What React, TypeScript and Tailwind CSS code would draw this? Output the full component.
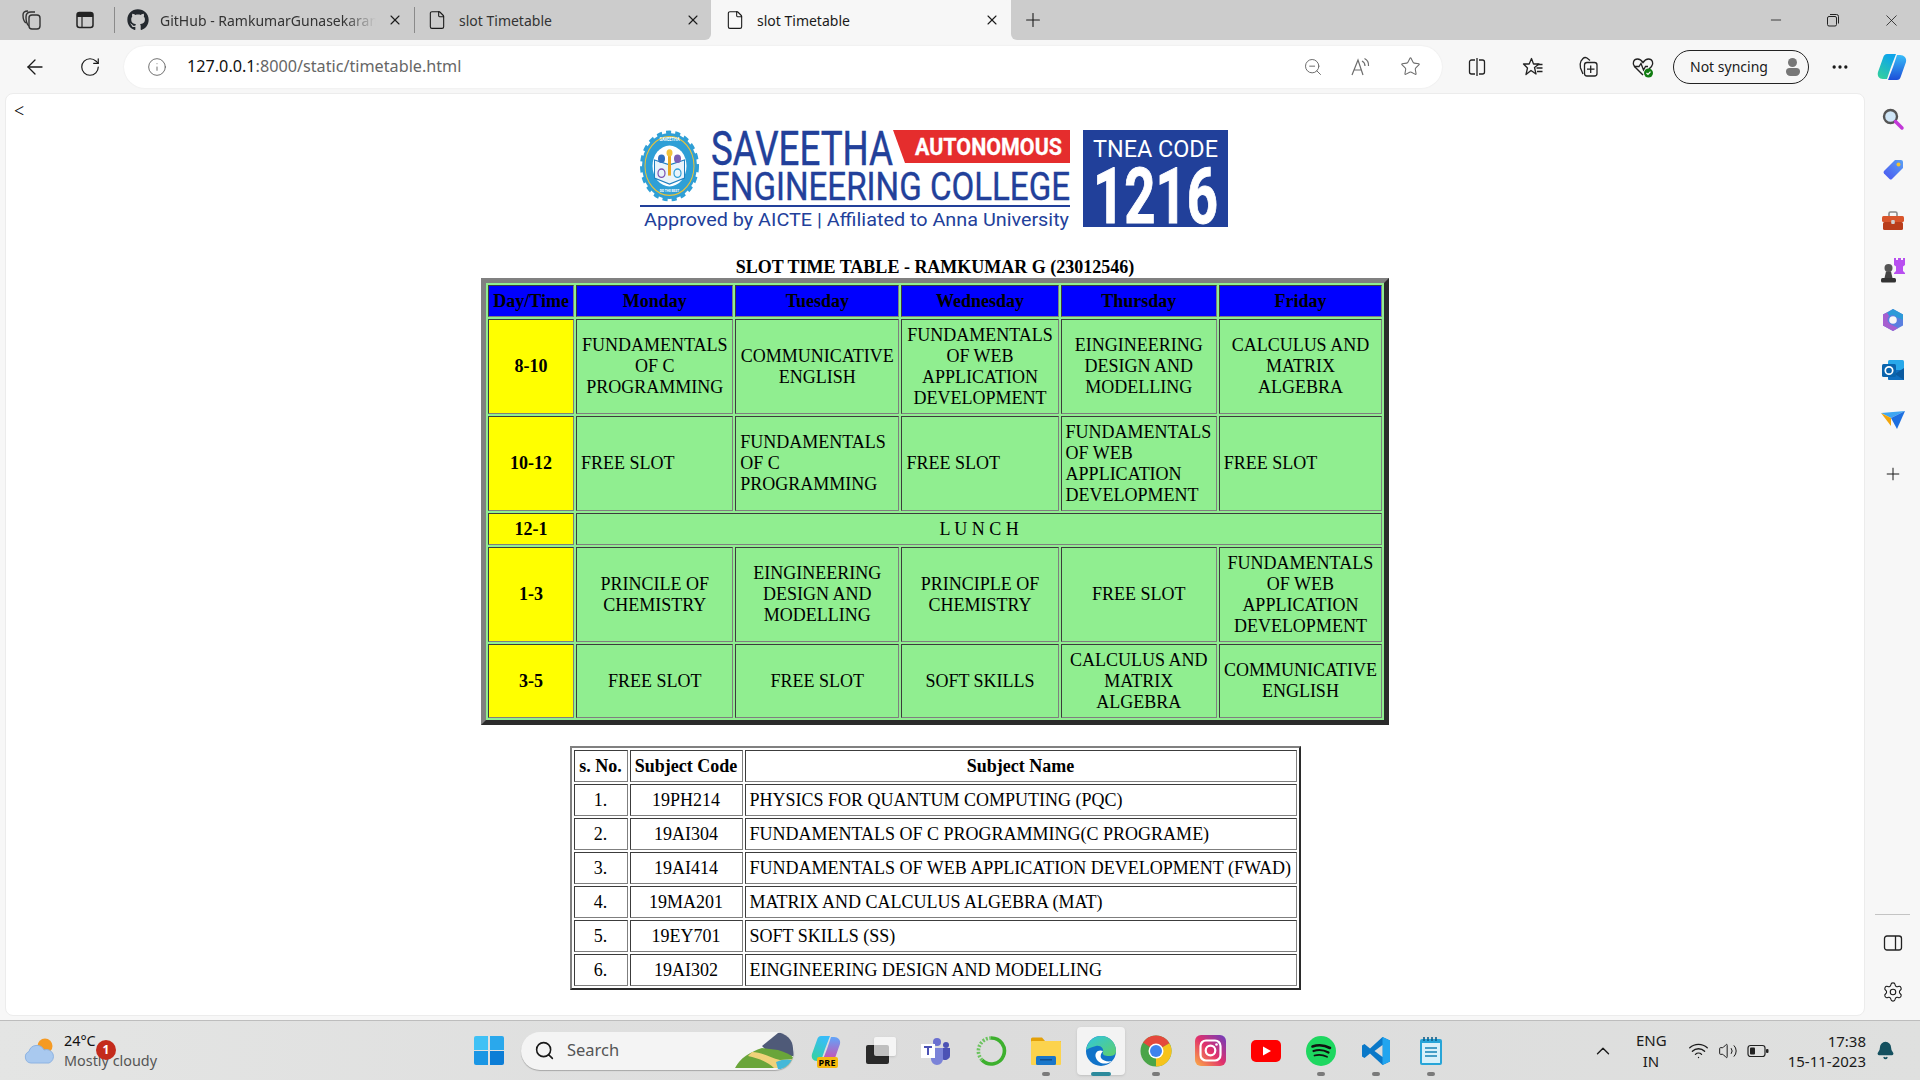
import {
  ArrowLeft,
  Bell,
  ChevronUp,
  Ellipsis,
  File,
  Info,
  Minus,
  Plus,
  RotateCw,
  Search,
  Settings,
  Star,
  Volume2,
  Wifi,
  X,
  ZoomOut,
} from "lucide-react";
import { FaGithub } from "react-icons/fa";

type Cell = { text: string; left?: boolean };

const days = ["Monday", "Tuesday", "Wednesday", "Thursday", "Friday"];

const FWAD = "FUNDAMENTALS OF WEB APPLICATION DEVELOPMENT";
const FC = "FUNDAMENTALS OF C PROGRAMMING";
const EDM = "EINGINEERING DESIGN AND MODELLING";
const CMA = "CALCULUS AND MATRIX ALGEBRA";
const CE = "COMMUNICATIVE ENGLISH";

const slots: { time: string; height: string; cells: Cell[] }[] = [
  {
    time: "8-10",
    height: "h-[95px]",
    cells: [{ text: FC }, { text: CE }, { text: FWAD }, { text: EDM }, { text: CMA }],
  },
  {
    time: "10-12",
    height: "h-[95px]",
    cells: [
      { text: "FREE SLOT", left: true },
      { text: FC, left: true },
      { text: "FREE SLOT", left: true },
      { text: FWAD, left: true },
      { text: "FREE SLOT", left: true },
    ],
  },
];

const afternoon: { time: string; height: string; cells: Cell[] }[] = [
  {
    time: "1-3",
    height: "h-[95px]",
    cells: [
      { text: "PRINCILE OF CHEMISTRY" },
      { text: EDM },
      { text: "PRINCIPLE OF CHEMISTRY" },
      { text: "FREE SLOT" },
      { text: FWAD },
    ],
  },
  {
    time: "3-5",
    height: "h-[74px]",
    cells: [
      { text: "FREE SLOT" },
      { text: "FREE SLOT" },
      { text: "SOFT SKILLS" },
      { text: CMA },
      { text: CE },
    ],
  },
];

const subjects = [
  ["1.", "19PH214", "PHYSICS FOR QUANTUM COMPUTING (PQC)"],
  ["2.", "19AI304", "FUNDAMENTALS OF C PROGRAMMING(C PROGRAME)"],
  ["3.", "19AI414", "FUNDAMENTALS OF WEB APPLICATION DEVELOPMENT (FWAD)"],
  ["4.", "19MA201", "MATRIX AND CALCULUS ALGEBRA (MAT)"],
  ["5.", "19EY701", "SOFT SKILLS (SS)"],
  ["6.", "19AI302", "EINGINEERING DESIGN AND MODELLING"],
];

const cellBorder = "border border-t-[#3c3c3c] border-l-[#3c3c3c] border-r-[#7f7f7f] border-b-[#7f7f7f]";

function SlotRow({ time, height, cells }: { time: string; height: string; cells: Cell[] }) {
  return (
    <tr className={height}>
      <td className={`${cellBorder} bg-[#ffff00] text-center font-bold`}>{time}</td>
      {cells.map((c, i) => (
        <td key={i} className={`${cellBorder} px-[4px] py-0 ${c.left ? "text-left" : "text-center"}`}>
          {c.text}
        </td>
      ))}
    </tr>
  );
}

function Logo() {
  const navy = "#22409a";
  return (
    <svg width="590" height="100" viewBox="0 0 590 100" className="block">
      <g transform="translate(29.5 36) scale(1 1.2)">
        <circle r="27.5" fill="#2f9fd6" stroke="#2f9fd6" strokeWidth="4" strokeDasharray="5 4" />
        <circle r="24.5" fill="#2f9fd6" stroke="#e8c33a" strokeWidth="1" />
        <circle r="17" fill="#fff" />
        <path d="M-15 -5 L0 -1 L15 -5 L15 10 L0 15 L-15 10 Z" fill="#e9f4fb" stroke="#1e7fc0" strokeWidth="1" />
        <circle cx="-8" cy="-6" r="3.5" fill="#2f6fc0" />
        <circle cx="8" cy="-6" r="3.5" fill="#7a5fb5" />
        <rect x="-1.5" y="-9" width="3" height="17" fill="#e9a820" />
        <circle cy="-11" r="3" fill="#f3c33a" />
        <circle cx="-8" cy="6" r="3.5" fill="none" stroke="#7a4fb0" strokeWidth="1.2" />
        <circle cx="8" cy="6" r="3.5" fill="none" stroke="#2f9fd6" strokeWidth="1.2" />
        <text y="-20.5" textAnchor="middle" fontFamily="Roboto, sans-serif" fontWeight="700" fontSize="4" fill="#fff">
          SAVEETHA
        </text>
        <text y="21.5" textAnchor="middle" fontFamily="Roboto, sans-serif" fontWeight="700" fontSize="3.2" fill="#fff">
          DO THE BEST
        </text>
      </g>
      <text x="71" y="35" fontFamily="Roboto, sans-serif" fontSize="49" fill={navy} stroke={navy} strokeWidth="0.5" textLength="182" lengthAdjust="spacingAndGlyphs">
        SAVEETHA
      </text>
      <polygon points="253,0 430,0 430,33 265,33" fill="#e52d2d" />
      <text x="275" y="25" fontFamily="Roboto, sans-serif" fontWeight="700" fontSize="24" fill="#fff" stroke="#fff" strokeWidth="0.3" textLength="147" lengthAdjust="spacingAndGlyphs">
        AUTONOMOUS
      </text>
      <text x="71" y="70" fontFamily="Roboto, sans-serif" fontSize="39" fill={navy} stroke={navy} strokeWidth="0.4" textLength="359" lengthAdjust="spacingAndGlyphs">
        ENGINEERING COLLEGE
      </text>
      <rect x="0" y="75" width="430" height="2" fill={navy} />
      <text x="4" y="96" fontFamily="Roboto, sans-serif" fontSize="19" fill={navy} textLength="425" lengthAdjust="spacingAndGlyphs">
        Approved by AICTE | Affiliated to Anna University
      </text>
      <rect x="443" y="0" width="145" height="97" fill="#21409a" />
      <text x="453" y="27" fontFamily="Roboto, sans-serif" fontSize="24" fill="#fff" textLength="125" lengthAdjust="spacingAndGlyphs">
        TNEA CODE
      </text>
      <text x="453" y="93" fontFamily="Roboto, sans-serif" fontWeight="700" fontSize="78" fill="#fff" stroke="#fff" strokeWidth="1" textLength="125" lengthAdjust="spacingAndGlyphs">
        1216
      </text>
    </svg>
  );
}

function WorkspaceIcon() {
  return (
    <svg width="22" height="22" viewBox="0 0 22 22" fill="none" stroke="#333" strokeWidth="1.4">
      <rect x="8" y="6" width="11" height="14" rx="3" />
      <path d="M8 17 C5 15 5 11 5 8 C5 5 7 3 10 3 L14 3" />
      <path d="M5 14 C2 12 2 9 2 6 C2 3 4 2 7 2" />
    </svg>
  );
}

function TabsIcon() {
  return (
    <svg width="20" height="20" viewBox="0 0 20 20" fill="none">
      <rect x="2" y="2.5" width="16" height="15" rx="2.5" stroke="#222" strokeWidth="1.5" />
      <path d="M2 5 a2.5 2.5 0 0 1 2.5 -2.5 h11 a2.5 2.5 0 0 1 2.5 2.5 v2 h-16 z" fill="#222" />
      <path d="M7 7 v10" stroke="#222" strokeWidth="1.2" />
    </svg>
  );
}

function RestoreIcon() {
  return (
    <svg width="14" height="14" viewBox="0 0 14 14" fill="none" stroke="#222" strokeWidth="1">
      <rect x="1.5" y="3.5" width="9" height="9.5" rx="1.5" />
      <path d="M4 1.5 h6.5 a2 2 0 0 1 2 2 v7" />
    </svg>
  );
}

function ReadAloudIcon() {
  return (
    <svg width="22" height="22" viewBox="0 0 22 22" fill="none" stroke="#6d6d6d" strokeWidth="1.2">
      <path d="M2 19 L8 4 L13 19 M4 14 H11.5" />
      <path d="M12 5 C14 6 15 8 15 10 M14.5 2.5 C17.5 4 18.8 7 18.5 10" />
    </svg>
  );
}

function SplitIcon() {
  return (
    <svg width="20" height="20" viewBox="0 0 20 20" fill="none" stroke="#222" strokeWidth="1.3">
      <path d="M8 3 H4.5 A2 2 0 0 0 2.5 5 V15 A2 2 0 0 0 4.5 17 H8 M12 3 H15.5 A2 2 0 0 1 17.5 5 V15 A2 2 0 0 1 15.5 17 H12" />
      <path d="M10 1 V19" />
    </svg>
  );
}

function FavoritesIcon() {
  return (
    <svg width="22" height="22" viewBox="0 0 22 22" fill="none" stroke="#222" strokeWidth="1.3" strokeLinejoin="round">
      <path d="M9.5 2.5 L11.5 8 H17 L12.5 11.5 L14 18 L9 14.5 L4 18.5 L5.5 12 L1.5 8 H7.2 Z" />
      <path d="M15 8.5 H20.5 M14.5 12 H20.5 M15 15.5 H20.5" />
    </svg>
  );
}

function CollectionsIcon() {
  return (
    <svg width="22" height="22" viewBox="0 0 22 22" fill="none" stroke="#222" strokeWidth="1.3">
      <path d="M6 18 L3.5 12 C3 10 3 7 4 5 L6 2.5 C7 1.5 9 1.5 10 2 L13 4.5" />
      <rect x="7.5" y="6.5" width="12.5" height="13.5" rx="2.5" />
      <path d="M13.7 9.5 V17 M10 13.2 H17.5" />
    </svg>
  );
}

function HealthIcon() {
  return (
    <svg width="24" height="24" viewBox="0 0 24 24" fill="none">
      <path
        d="M12 20 L3.5 11.5 C1 8.5 2.5 4 6.5 4 C9 4 11 6 12 7.5 C13 6 15 4 17.5 4 C21.5 4 23 8.5 20.5 11.5 L18 14"
        stroke="#222"
        strokeWidth="1.4"
      />
      <path d="M3 11.5 H8 L10 8.5 L12.5 15 L14.5 11.5 H17" stroke="#222" strokeWidth="1.3" />
      <circle cx="17.5" cy="18" r="4.5" fill="#107c10" />
      <path d="M15.5 18 L17 19.5 L19.5 16.7" stroke="#fff" strokeWidth="1.2" />
    </svg>
  );
}

function CopilotIcon({ id, colors }: { id: string; colors: string[] }) {
  return (
    <svg width="30" height="30" viewBox="0 0 30 30">
      <defs>
        <linearGradient id={`${id}-a`} x1="0.5" y1="0" x2="0" y2="1">
          <stop offset="0" stopColor={colors[0]} />
          <stop offset="1" stopColor={colors[1]} />
        </linearGradient>
        <linearGradient id={`${id}-b`} x1="0.5" y1="0" x2="0.5" y2="1">
          <stop offset="0" stopColor={colors[2]} />
          <stop offset="1" stopColor={colors[3]} />
        </linearGradient>
      </defs>
      <path d="M10 2 H19 L14 15 L10 27 H6 C2 27 0 24 1 20 L6 6 C7 3 8 2 10 2 Z" fill={`url(#${id}-a)`} />
      <path d="M20 28 H11 L16 15 L20 3 H23 C27 3 30 6 29 10 L24 24 C23 27 22 28 20 28 Z" fill={`url(#${id}-b)`} />
    </svg>
  );
}

function SideSearchIcon() {
  return (
    <svg width="24" height="24" viewBox="0 0 24 24" fill="none">
      <circle cx="9.5" cy="9.5" r="6.5" fill="#cfe6f7" stroke="#555" strokeWidth="2.4" />
      <path d="M14.5 14.5 L21 21" stroke="#c238d8" strokeWidth="3.5" strokeLinecap="round" />
    </svg>
  );
}

function TagIcon() {
  return (
    <svg width="24" height="24" viewBox="0 0 24 24">
      <defs>
        <linearGradient id="tag-g" x1="0" y1="1" x2="1" y2="0">
          <stop offset="0" stopColor="#4a55f0" />
          <stop offset="1" stopColor="#5aa0f5" />
        </linearGradient>
      </defs>
      <path d="M14 2 H20 A2 2 0 0 1 22 4 V10 L11 21 A2 2 0 0 1 8.5 21 L3 15.5 A2 2 0 0 1 3 13 Z" fill="url(#tag-g)" />
      <circle cx="17.5" cy="6.5" r="2" fill="#f2c230" />
    </svg>
  );
}

function ToolboxIcon() {
  return (
    <svg width="24" height="24" viewBox="0 0 24 24">
      <path d="M8 7 V4.5 A1.5 1.5 0 0 1 9.5 3 H14.5 A1.5 1.5 0 0 1 16 4.5 V7" fill="none" stroke="#888" strokeWidth="1.6" />
      <rect x="1" y="7" width="22" height="6" rx="1.5" fill="#d9552b" />
      <rect x="2" y="13" width="20" height="8" rx="1.5" fill="#b93d1b" />
      <rect x="10.2" y="11" width="3.6" height="4" rx="1" fill="#cfcfcf" />
    </svg>
  );
}

function ChessIcon() {
  return (
    <svg width="24" height="26" viewBox="0 0 24 26">
      <path d="M13 1 H15 V3 H17 V1 H20 V3 H22 V1 H24 V8 L22 9.5 V14 L24 16 V17 H13 V16 L15 14 V9.5 L13 8 Z" fill="#b84ff0" />
      <circle cx="7.5" cy="11" r="4" fill="#555" />
      <path d="M5 14.5 H10 L11.5 21 H3.5 Z" fill="#444" />
      <rect x="0" y="21" width="15" height="4.5" rx="1.5" fill="#333" />
    </svg>
  );
}

function M365Icon() {
  return (
    <svg width="24" height="24" viewBox="0 0 24 24">
      <path d="M12 1 L22 6.5 V17.5 L12 23 L2 17.5 V6.5 Z" fill="#5a7fe0" />
      <path d="M12 1 L22 6.5 L22 12 L15 9 A4 4 0 0 0 9 8 L6 5 Z" fill="#2d9ad8" />
      <path d="M2 6.5 V17.5 L12 23 L17 20 L9 16 A5 5 0 0 1 8 8 L6 4.5 Z" fill="#a65fd0" />
      <circle cx="12" cy="12" r="3.8" fill="#f7f7f7" />
    </svg>
  );
}

function OutlookIcon() {
  return (
    <svg width="24" height="24" viewBox="0 0 24 24">
      <rect x="7" y="2" width="16" height="20" rx="1.5" fill="#28a8ea" />
      <path d="M7 12 L23 12 V22 H8.5 A1.5 1.5 0 0 1 7 20.5 Z" fill="#0f6fc0" />
      <path d="M23 10 L14 16 L23 22 Z" fill="#0a5aa0" />
      <rect x="1" y="6" width="14" height="13" rx="1.5" fill="#0a64ad" />
      <circle cx="8" cy="12.5" r="3.7" fill="none" stroke="#fff" strokeWidth="1.7" />
    </svg>
  );
}

function SendIcon() {
  return (
    <svg width="24" height="20" viewBox="0 0 24 20">
      <path d="M0 3 L24 1 L10 8 Z" fill="#3ea6f2" />
      <path d="M0 3 L10 8 L10 16 Z" fill="#f2a60c" />
      <path d="M24 1 L10 8 L16 19 Z" fill="#1d6fe0" />
    </svg>
  );
}

function PanelIcon() {
  return (
    <svg width="20" height="18" viewBox="0 0 20 18" fill="none" stroke="#222" strokeWidth="1.3">
      <rect x="1.5" y="2" width="17" height="14" rx="2.5" />
      <path d="M12.5 2 V16" />
    </svg>
  );
}

function WeatherIcon() {
  return (
    <svg width="32" height="26" viewBox="0 0 32 26">
      <circle cx="21" cy="8" r="7.5" fill="#f59a23" />
      <path d="M7 25 A6 6 0 0 1 5 13.5 A8 8 0 0 1 20 12 A6.5 6.5 0 0 1 25 25 Z" fill="#a9c9ef" stroke="#8db3e2" strokeWidth="1" />
    </svg>
  );
}

function WindowsIcon() {
  return (
    <div className="grid h-[29px] w-[30px] grid-cols-2 gap-[1.5px]">
      <div className="rounded-tl-[2px] bg-[#3fc1f5]" />
      <div className="rounded-tr-[2px] bg-[#2aa8ec]" />
      <div className="rounded-bl-[2px] bg-[#1a96e4]" />
      <div className="rounded-br-[2px] bg-[#0c7dd6]" />
    </div>
  );
}

function SearchScene() {
  return (
    <svg width="62" height="38" viewBox="0 0 62 38">
      <path d="M30 14 L46 1 C52 0 58 2 60 8 L62 24 L40 24 Z" fill="#4f5a78" />
      <path d="M3 36 C8 26 18 20 30 16 L46 18 C52 20 58 22 62 26 L60 36 Z" fill="#6aa53a" />
      <path d="M20 20 C30 20 38 26 48 28 L60 27 L58 36 L42 36 C36 30 26 26 16 24 Z" fill="#f0d27a" />
      <path d="M44 30 C50 27 56 27 61 28 L59 37 L46 37 Z" fill="#45b8d8" />
    </svg>
  );
}

function StoreSquareIcon() {
  return (
    <div className="relative h-[27px] w-[30px]">
      <div className="absolute bottom-0 left-0 h-[19px] w-[23px] rounded-[2px] bg-[#2a2a2a]" />
      <div className="absolute right-0 top-0 h-[19px] w-[22px] rounded-[2px] bg-white/70 shadow-sm" />
    </div>
  );
}

function PreCopilot() {
  return (
    <div className="relative h-[34px] w-[30px]">
      <CopilotIcon id="cop-pre" colors={["#38bdf8", "#34d399", "#60a5fa", "#d946a8"]} />
      <span className="absolute bottom-0 left-[6px] rounded-[2px] bg-[#f5b90f] px-[2px] text-[9px] font-bold leading-[11px] tracking-wide text-black">
        PRE
      </span>
    </div>
  );
}

function TeamsIcon() {
  return (
    <svg width="30" height="28" viewBox="0 0 30 28">
      <circle cx="16" cy="5" r="4" fill="#6a6fd0" />
      <circle cx="25" cy="8" r="3" fill="#4c52b5" />
      <path d="M20 11 H29 V19 A5 5 0 0 1 21 22 Z" fill="#4c52b5" />
      <path d="M9 11 H22 V22 A6 6 0 0 1 10 22 Z" fill="#7b83d8" />
      <rect x="0" y="7" width="14" height="14" fill="#fff" />
      <path d="M3 10 H11 M7 10 V18" stroke="#4c52b5" strokeWidth="2" />
    </svg>
  );
}

function RingIcon() {
  return (
    <svg width="32" height="32" viewBox="0 0 32 32" fill="none">
      <path d="M16 3 A13 13 0 1 1 7 25" stroke="#3db02e" strokeWidth="3.6" />
      <path d="M7 25 A13 13 0 0 1 16 3" stroke="#6cc35f" strokeWidth="3.6" strokeDasharray="2 1.5" />
    </svg>
  );
}

function FolderIcon() {
  return (
    <svg width="30" height="30" viewBox="0 0 30 30">
      <path d="M0 3 A1.5 1.5 0 0 1 1.5 1.5 H11 L14 5 H30 V10 H0 Z" fill="#e3a008" />
      <rect x="0" y="5" width="30" height="24" rx="1" fill="#fcd34d" />
      <rect x="5" y="20" width="20" height="9" rx="1.5" fill="#1976c9" />
      <rect x="9" y="23" width="12" height="1.5" fill="#0f4f8f" />
    </svg>
  );
}

function EdgeIcon() {
  return (
    <svg width="32" height="32" viewBox="0 0 32 32">
      <defs>
        <linearGradient id="edge-g" x1="0" y1="0" x2="1" y2="1">
          <stop offset="0" stopColor="#2fc5e0" />
          <stop offset="1" stopColor="#5fd06a" />
        </linearGradient>
      </defs>
      <circle cx="16" cy="16" r="15" fill="#1173c9" />
      <path d="M1 15 C3 5 10 1 16 1 C25 1 31 8 31 16 C31 20 28 21 24 21 C20 21 17 20 18 17 C19 14 16 10 11 11 C6 12 3 14 1 15 Z" fill="url(#edge-g)" />
      <path d="M18 16 C13 14 9 18 11 23 C13 28 20 31 27 26 C23 27 18 26 16 23 C15 21 16 18 18 16 Z" fill="#fff" />
    </svg>
  );
}

function ChromeIcon() {
  return (
    <svg width="32" height="32" viewBox="0 0 32 32">
      <circle cx="16" cy="16" r="15.5" fill="#4aa548" />
      <path d="M16 .5 A15.5 15.5 0 0 1 29.4 8.2 L16 16 L3 7.5 A15.5 15.5 0 0 1 16 .5 Z" fill="#e5483c" />
      <path d="M29.4 8.2 A15.5 15.5 0 0 1 16 31.5 L16 16 Z" fill="#f6c31c" />
      <circle cx="16" cy="16" r="7.5" fill="#fff" />
      <circle cx="16" cy="16" r="6" fill="#3f83ee" />
    </svg>
  );
}

function InstagramIcon() {
  return (
    <svg width="31" height="31" viewBox="0 0 31 31">
      <defs>
        <linearGradient id="ig-g" x1="0" y1="1" x2="1" y2="0">
          <stop offset="0" stopColor="#fcb045" />
          <stop offset="0.5" stopColor="#e1306c" />
          <stop offset="1" stopColor="#6a3fc0" />
        </linearGradient>
      </defs>
      <rect width="31" height="31" rx="6" fill="url(#ig-g)" />
      <rect x="5.5" y="5.5" width="20" height="20" rx="5.5" fill="none" stroke="#fff" strokeWidth="2.2" />
      <circle cx="15.5" cy="15.5" r="4.8" fill="none" stroke="#fff" strokeWidth="2.2" />
      <circle cx="21.5" cy="9.5" r="1.3" fill="#fff" />
    </svg>
  );
}

function YoutubeIcon() {
  return (
    <svg width="30" height="22" viewBox="0 0 30 22">
      <rect width="30" height="22" rx="5" fill="#ff0000" />
      <path d="M12 6.5 L20 11 L12 15.5 Z" fill="#fff" />
    </svg>
  );
}

function SpotifyIcon() {
  return (
    <svg width="30" height="30" viewBox="0 0 30 30" fill="none">
      <circle cx="15" cy="15" r="15" fill="#1ed760" />
      <path d="M6.5 10.5 C12 8.5 18.5 9 24 12" stroke="#111" strokeWidth="2.6" strokeLinecap="round" />
      <path d="M7.5 15 C12 13.5 18 14 22.5 16.5" stroke="#111" strokeWidth="2.2" strokeLinecap="round" />
      <path d="M8.5 19.5 C12.5 18.3 17 18.7 21 20.8" stroke="#111" strokeWidth="1.8" strokeLinecap="round" />
    </svg>
  );
}

function VsCodeIcon() {
  return (
    <svg width="30" height="30" viewBox="0 0 30 30">
      <path d="M21.5 1 L29 4.5 V25.5 L21.5 29 L9 17.5 L3.5 22 L1 20.5 V9.5 L3.5 8 L9 12.5 Z" fill="#0a78c8" />
      <path d="M21.5 1 L29 4.5 V25.5 L21.5 29 Z" fill="#22a5ef" />
      <path d="M21.5 9 V21 L13.5 15 Z" fill="#dcdcdc" />
    </svg>
  );
}

function NotepadIcon() {
  return (
    <svg width="24" height="30" viewBox="0 0 24 30">
      <rect x="1" y="3" width="22" height="26" rx="2" fill="#27a5d8" />
      <rect x="3" y="7" width="18" height="20" fill="#d8f1fa" />
      <path d="M6 12 H18 M6 16 H18 M6 20 H18" stroke="#1582b5" strokeWidth="1.5" />
      <path d="M5 1 V5 M9 1 V5 M13 1 V5 M17 1 V5" stroke="#0f5f8c" strokeWidth="1.6" />
    </svg>
  );
}

function BatteryIcon() {
  return (
    <svg width="22" height="16" viewBox="0 0 22 16" fill="none">
      <rect x="1" y="2.5" width="17" height="11" rx="2.5" stroke="#222" strokeWidth="1.2" />
      <rect x="3" y="4.5" width="5" height="7" rx="1" fill="#222" />
      <rect x="19" y="6" width="2.5" height="4" rx="1" fill="#222" />
    </svg>
  );
}

// one taskbar slot, 55px pitch, with the running dot under it
function Slot({ children, dot, active }: { children: React.ReactNode; dot?: boolean; active?: boolean }) {
  return (
    <div className="relative flex h-[48px] w-[55px] items-center justify-center">
      {active && <div className="absolute inset-x-[3.5px] inset-y-0 rounded-[4px] bg-[#f3f3f3] shadow-sm" />}
      <div className="relative">{children}</div>
      {dot && <div className="absolute bottom-[-1px] h-[4px] w-[8px] rounded-full bg-[#7a7a7a]" />}
      {active && <div className="absolute bottom-[-1px] h-[4px] w-[20px] rounded-full bg-[#2c8a9c]" />}
    </div>
  );
}

function SideIcon({ children, className }: { children: React.ReactNode; className: string }) {
  return <div className={`flex items-center justify-center ${className}`}>{children}</div>;
}

export default function App() {
  return (
    <div className="flex h-[1080px] w-[1920px] flex-col overflow-hidden font-['Noto_Sans',sans-serif] text-[#1a1a1a]">
      {/* tab strip */}
      <div className="flex h-[40px] bg-[#f7f7f7] text-[14px]">
        <div className="flex w-[711px] items-center rounded-br-[6px] bg-[#cccccc]">
          <div className="flex w-[64px] justify-center"><WorkspaceIcon /></div>
          <div className="flex w-[42px] justify-center"><TabsIcon /></div>
          <div className="ml-[8px] h-[26px] w-px bg-[#8a8a8a]" />
          <div className="ml-[12px] flex w-[22px] justify-center"><FaGithub size={22} color="#24292f" /></div>
          <span className="ml-[11px] w-[216px] overflow-hidden whitespace-nowrap text-[#333] [mask-image:linear-gradient(to_right,black_85%,transparent)]">
            GitHub - RamkumarGunasekaran
          </span>
          <div className="ml-[10px] flex w-[18px] justify-center"><X size={16} strokeWidth={1.6} /></div>
          <div className="ml-[10px] h-[26px] w-px bg-[#8a8a8a]" />
          <div className="ml-[12px] flex w-[20px] justify-center"><File size={20} strokeWidth={1.3} /></div>
          <span className="ml-[12px] w-[226px] whitespace-nowrap text-[#333]">slot Timetable</span>
          <X size={16} strokeWidth={1.6} />
        </div>
        <div className="flex w-[300px] items-center rounded-t-[8px] bg-[#f7f7f7]">
          <div className="ml-[14px] flex w-[20px] justify-center"><File size={20} strokeWidth={1.3} /></div>
          <span className="ml-[12px] w-[227px] whitespace-nowrap">slot Timetable</span>
          <X size={16} strokeWidth={1.6} />
        </div>
        <div className="flex flex-1 items-center rounded-bl-[6px] bg-[#cccccc]">
          <Plus size={22} strokeWidth={1.2} className="ml-[11px]" />
          <div className="flex-1" />
          <Minus size={16} strokeWidth={1.2} className="mr-[42px]" />
          <div className="mr-[42px]"><RestoreIcon /></div>
          <X size={19} strokeWidth={1} className="mr-[19px]" />
        </div>
      </div>

      {/* toolbar */}
      <div className="flex h-[53px] items-center bg-[#f7f7f7]">
        <div className="flex w-[70px] justify-center"><ArrowLeft size={24} strokeWidth={1.3} /></div>
        <div className="flex w-[40px] justify-center"><RotateCw size={22} strokeWidth={1.3} /></div>
        <div className="ml-[14px] flex h-[42px] w-[1318px] items-center rounded-full bg-white shadow-[0_0_2px_rgba(0,0,0,0.08)]">
          <div className="ml-[23px] flex w-[20px] justify-center"><Info size={20} strokeWidth={1} color="#555" /></div>
          <span className="ml-[20px] whitespace-nowrap text-[16.2px] text-[#666]">
            <span className="text-[#111]">127.0.0.1</span>:8000/static/timetable.html
          </span>
          <div className="flex-1" />
          <ZoomOut size={20} strokeWidth={1.2} color="#6d6d6d" className="mr-[27px]" />
          <div className="mr-[28px]"><ReadAloudIcon /></div>
          <Star size={21} strokeWidth={1.2} color="#6d6d6d" className="mr-[21px]" />
        </div>
        <div className="ml-[25px] flex w-[20px] justify-center"><SplitIcon /></div>
        <div className="ml-[35px] flex w-[22px] justify-center"><FavoritesIcon /></div>
        <div className="ml-[33px] flex w-[22px] justify-center"><CollectionsIcon /></div>
        <div className="ml-[32px] flex w-[24px] justify-center"><HealthIcon /></div>
        <div className="ml-[18px] flex h-[34px] w-[136px] items-center rounded-full border border-[#222] pl-[16px] text-[14px]">
          <span className="whitespace-nowrap">Not syncing</span>
          <div className="ml-[11px] flex h-[28px] w-[28px] flex-col items-center justify-center rounded-full bg-[#f7f7f7]">
            <div className="h-[9px] w-[9px] rounded-full bg-[#777]" />
            <div className="mt-px h-[8px] w-[14px] rounded-t-[4px] rounded-b-[5px] bg-[#777]" />
          </div>
        </div>
        <div className="ml-[21px] flex w-[20px] justify-center"><Ellipsis size={20} strokeWidth={2} /></div>
        <div className="ml-[27px] flex w-[30px] justify-center">
          <CopilotIcon id="cop-main" colors={["#0ea5e9", "#34d399", "#38bdf8", "#1d4ed8"]} />
        </div>
      </div>

      {/* page + edge sidebar */}
      <div className="flex h-[927px] bg-[#f7f7f7] pb-[4px] pl-[5px]">
        <main className="flex w-[1860px] flex-col items-center rounded-[8px] border border-[#ececec] bg-white font-['Liberation_Serif',serif] text-[18px] leading-[21px] text-black">
          <div className="mt-[7px] self-start pl-[8px]">&lt;</div>
          <div className="mt-[8px]"><Logo /></div>
          <h1 className="mt-[27px] h-[21px] font-bold">SLOT TIME TABLE - RAMKUMAR G (23012546)</h1>
          <table className="w-[908px] table-fixed border-separate border-spacing-[2px] border-[5.5px] border-t-[#808080] border-l-[#808080] border-r-[#2b2b2b] border-b-[#2b2b2b] bg-[#90ee90]">
            <colgroup>
              <col className="w-[86px]" />
              <col className="w-[157px]" />
              <col className="w-[164px]" />
              <col className="w-[157px]" />
              <col className="w-[156px]" />
              <col className="w-[163px]" />
            </colgroup>
            <thead>
              <tr className="h-[32px] bg-[#0000ff] font-bold">
                <th className={cellBorder}>Day/Time</th>
                {days.map((d) => (
                  <th key={d} className={cellBorder}>{d}</th>
                ))}
              </tr>
            </thead>
            <tbody>
              {slots.map((s) => (
                <SlotRow key={s.time} {...s} />
              ))}
              <tr className="h-[32px]">
                <td className={`${cellBorder} bg-[#ffff00] text-center font-bold`}>12-1</td>
                <td colSpan={5} className={`${cellBorder} text-center`}>L U N C H</td>
              </tr>
              {afternoon.map((s) => (
                <SlotRow key={s.time} {...s} />
              ))}
            </tbody>
          </table>
          <table className="mt-[21px] w-[731px] table-fixed border-separate border-spacing-[2px] border-2 border-t-[#808080] border-l-[#808080] border-r-[#2b2b2b] border-b-[#2b2b2b]">
            <colgroup>
              <col className="w-[54px]" />
              <col className="w-[113px]" />
              <col className="w-[552px]" />
            </colgroup>
            <thead>
              <tr className="h-[32px]">
                <th className={cellBorder}>s. No.</th>
                <th className={`${cellBorder} whitespace-nowrap`}>Subject Code</th>
                <th className={cellBorder}>Subject Name</th>
              </tr>
            </thead>
            <tbody>
              {subjects.map(([no, code, name]) => (
                <tr key={no} className="h-[32px]">
                  <td className={`${cellBorder} text-center`}>{no}</td>
                  <td className={`${cellBorder} text-center`}>{code}</td>
                  <td className={`${cellBorder} whitespace-nowrap px-[4px]`}>{name}</td>
                </tr>
              ))}
            </tbody>
          </table>
        </main>
        <aside className="flex flex-1 flex-col items-center pt-[13px]">
          <SideIcon className="h-[26px]"><SideSearchIcon /></SideIcon>
          <SideIcon className="mt-[25px] h-[26px]"><TagIcon /></SideIcon>
          <SideIcon className="mt-[25px] h-[26px]"><ToolboxIcon /></SideIcon>
          <SideIcon className="mt-[23px] h-[26px]"><ChessIcon /></SideIcon>
          <SideIcon className="mt-[24px] h-[26px]"><M365Icon /></SideIcon>
          <SideIcon className="mt-[24px] h-[26px]"><OutlookIcon /></SideIcon>
          <SideIcon className="mt-[24px] h-[26px]"><SendIcon /></SideIcon>
          <SideIcon className="mt-[28px] h-[26px]"><Plus size={20} strokeWidth={1.2} /></SideIcon>
          <div className="flex-1" />
          <div className="h-px w-[35px] bg-[#c4c4c4]" />
          <SideIcon className="mt-[18px] h-[20px]"><PanelIcon /></SideIcon>
          <SideIcon className="mb-[12px] mt-[27px] h-[24px]"><Settings size={22} strokeWidth={1.2} /></SideIcon>
        </aside>
      </div>

      {/* taskbar */}
      <div className="flex h-[60px] items-center border-t border-[#bdbdbd] bg-gradient-to-r from-[#e4e5e4] via-[#dcdcdc] to-[#dfe0df] text-[15px]">
        <div className="relative flex w-[474px] items-center pl-[24px] text-[14.4px]">
          <WeatherIcon />
          <div className="ml-[8px] leading-[20px]">
            <div className="text-[#111]">24°C</div>
            <div className="text-[#555]">Mostly cloudy</div>
          </div>
          <span className="absolute left-[96px] top-[9px] flex h-[20px] w-[20px] items-center justify-center rounded-full bg-[#c42b1c] text-[12px] font-bold text-white">
            1
          </span>
        </div>
        <WindowsIcon />
        <div className="ml-[17px] flex h-[38px] w-[273px] items-center overflow-hidden rounded-full bg-[#f4f4f4] shadow-[0_1px_1px_rgba(0,0,0,0.25)]">
          <Search size={21} strokeWidth={1.8} className="ml-[13px]" />
          <span className="ml-[12px] text-[16.5px] text-[#555]">Search</span>
          <div className="flex-1" />
          <SearchScene />
        </div>
        <div className="ml-[4px] flex items-center">
          <Slot><PreCopilot /></Slot>
          <Slot><StoreSquareIcon /></Slot>
          <Slot><TeamsIcon /></Slot>
          <Slot><RingIcon /></Slot>
          <Slot dot><FolderIcon /></Slot>
          <Slot active><EdgeIcon /></Slot>
          <Slot dot><ChromeIcon /></Slot>
          <Slot><InstagramIcon /></Slot>
          <Slot><YoutubeIcon /></Slot>
          <Slot dot><SpotifyIcon /></Slot>
          <Slot dot><VsCodeIcon /></Slot>
          <Slot dot><NotepadIcon /></Slot>
        </div>
        <div className="flex-1" />
        <ChevronUp size={22} strokeWidth={1.5} className="mr-[22px]" />
        <div className="mr-[22px] w-[30px] text-center leading-[21px]">ENG<br />IN</div>
        <Wifi size={21} strokeWidth={1.5} className="mr-[9px]" />
        <Volume2 size={20} strokeWidth={1.2} className="mr-[9px]" />
        <BatteryIcon />
        <div className="ml-[16px] w-[81px] text-right leading-[20px]">17:38<br /><span className="whitespace-nowrap">15-11-2023</span></div>
        <Bell size={19} fill="#14505f" color="#14505f" className="ml-[10px] mr-[25px]" />
      </div>
    </div>
  );
}
